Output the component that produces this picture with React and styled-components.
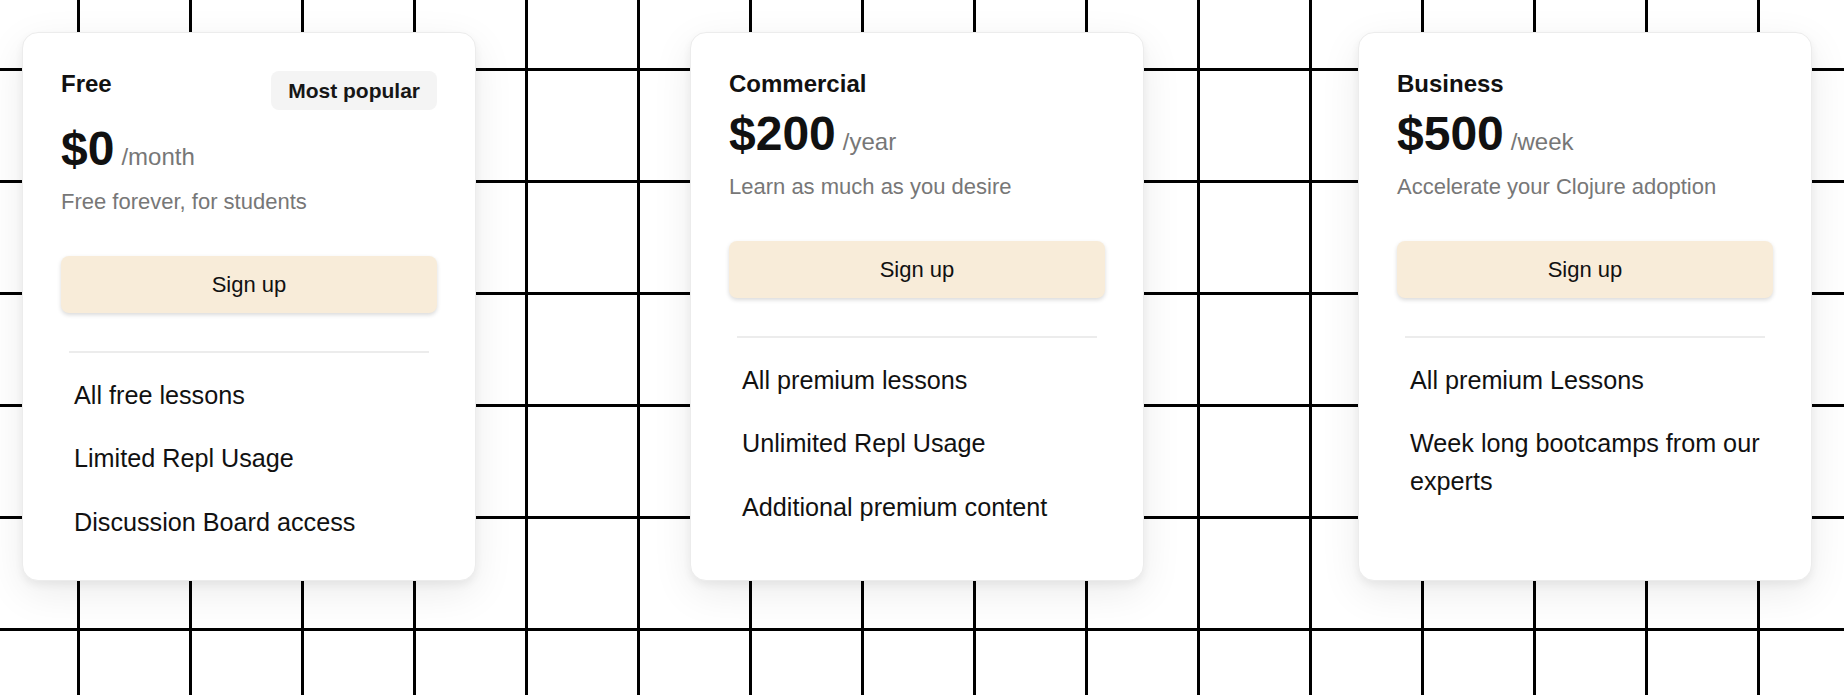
import styled, { createGlobalStyle } from "styled-components";

const GlobalStyle = createGlobalStyle`
  html, body {
    margin: 0;
    padding: 0;
    height: 100%;
  }
  body {
    font-family: "Liberation Sans", Arial, sans-serif;
    background-color: #ffffff;
    background-image:
      linear-gradient(to right, #000 3px, transparent 3px),
      linear-gradient(to bottom, #000 3px, transparent 3px);
    background-size: 112px 112px;
    background-position: 77px 68px;
  }
`;

const Page = styled.div`
  display: flex;
  align-items: flex-start;
  gap: 214px;
  padding: 32px 33px 0 22px;
  box-sizing: border-box;
  min-height: 100vh;
`;

const Card = styled.div`
  flex: 0 0 454px;
  box-sizing: border-box;
  height: 549px;
  display: flex;
  flex-direction: column;
  padding: 38px;
  background: #fff;
  border: 1px solid #ececec;
  border-radius: 16px;
  box-shadow: 0 4px 8px rgba(0, 0, 0, 0.06), 0 12px 40px rgba(0, 0, 0, 0.08);
`;

const Header = styled.div`
  display: flex;
  justify-content: space-between;
  align-items: flex-start;
  margin-top: -1px;
`;

const PlanName = styled.h2`
  margin: 0;
  font-size: 24px;
  font-weight: 700;
  line-height: normal;
  color: #111;
`;

const Badge = styled.span`
  margin-top: 1px;
  height: 39px;
  box-sizing: border-box;
  padding: 0 17px;
  display: flex;
  align-items: center;
  border-radius: 8px;
  background: #f4f4f4;
  color: #161616;
  font-size: 21px;
  font-weight: 700;
`;

const PriceRow = styled.div`
  margin-top: ${(p) => (p.$tight ? "8px" : "11px")};
  display: flex;
  align-items: baseline;
  gap: 7px;
`;

const Amount = styled.span`
  font-size: 48px;
  font-weight: 700;
  line-height: normal;
  color: #111;
`;

const Period = styled.span`
  font-size: 24px;
  color: #777;
`;

const Description = styled.p`
  margin: 13px 0 0;
  font-size: 22px;
  line-height: normal;
  color: #777;
`;

const SignUp = styled.button`
  margin-top: 41px;
  width: 100%;
  height: 57px;
  border: none;
  border-radius: 8px;
  background: #f8ecd9;
  box-shadow: 0 2px 4px rgba(0, 0, 0, 0.15);
  font-family: inherit;
  font-size: 22px;
  color: #111;
  cursor: pointer;
`;

const Divider = styled.hr`
  margin: 38px auto 0;
  width: 96%;
  height: 2px;
  border: none;
  background: #ececec;
`;

const Features = styled.ul`
  list-style: none;
  margin: 24px 0 0;
  padding: 0 0 0 13px;
  display: flex;
  flex-direction: column;
  gap: 25.5px;
`;

const Feature = styled.li`
  font-size: 25.2px;
  line-height: 1.5;
  color: #111;
`;

const plans = [
  {
    name: "Free",
    badge: "Most popular",
    amount: "$0",
    period: "/month",
    description: "Free forever, for students",
    features: ["All free lessons", "Limited Repl Usage", "Discussion Board access"],
  },
  {
    name: "Commercial",
    amount: "$200",
    period: "/year",
    description: "Learn as much as you desire",
    features: ["All premium lessons", "Unlimited Repl Usage", "Additional premium content"],
  },
  {
    name: "Business",
    amount: "$500",
    period: "/week",
    description: "Accelerate your Clojure adoption",
    features: ["All premium Lessons", "Week long bootcamps from our experts"],
  },
];

const App = () => {
  return (
    <>
      <GlobalStyle />
      <Page>
        {plans.map((plan) => (
          <Card key={plan.name}>
            <Header>
              <PlanName>{plan.name}</PlanName>
              {plan.badge && <Badge>{plan.badge}</Badge>}
            </Header>
            <PriceRow $tight={!plan.badge}>
              <Amount>{plan.amount}</Amount>
              <Period>{plan.period}</Period>
            </PriceRow>
            <Description>{plan.description}</Description>
            <SignUp type="button">Sign up</SignUp>
            <Divider />
            <Features>
              {plan.features.map((f) => (
                <Feature key={f}>{f}</Feature>
              ))}
            </Features>
          </Card>
        ))}
      </Page>
    </>
  );
};

export default App;
